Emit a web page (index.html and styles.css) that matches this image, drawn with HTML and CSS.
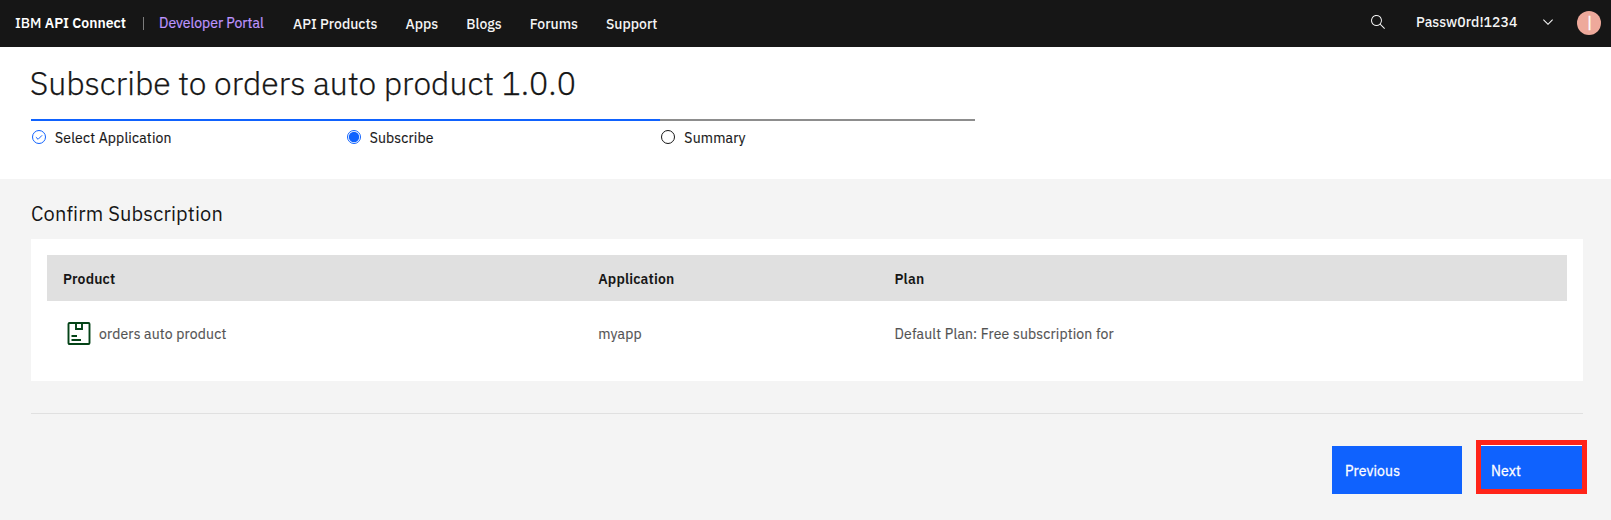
FILE: index.html
```html
<!DOCTYPE html>
<html lang="en">
<head>
<meta charset="utf-8">
<title>Subscribe to orders auto product 1.0.0</title>
<link rel="stylesheet" href="styles.css">
</head>
<body>
<header class="topbar">
  <div class="brand"><span class="brand-ibm">IBM</span> API Connect</div>
  <span class="divider"></span>
  <a class="portal">Developer Portal</a>
  <nav class="nav">
    <a>API Products</a><a>Apps</a><a>Blogs</a><a>Forums</a><a>Support</a>
  </nav>
  <div class="account">
    <svg class="search" viewBox="0 0 16 16"><path d="M15 14.3 10.7 10c1.9-2.3 1.6-5.8-.7-7.7S4.2.7 2.3 3 .7 8.8 3 10.7c2 1.7 5 1.7 7 0l4.3 4.3.7-.7zM2 6.500C2 4 4 2 6.500 2S11 4 11 6.500 9 11 6.500 11 2 9 2 6.500z"/></svg>
    <span class="user">Passw0rd!1234</span>
    <svg class="chevron" viewBox="0 0 16 16"><path d="M8 11 3 6l.7-.7L8 9.600l4.300-4.300.7.7z"/></svg>
    <span class="avatar">|</span>
  </div>
</header>
<section class="intro">
  <h1 class="title">Subscribe to orders auto product 1.0.0</h1>
  <ol class="steps">
    <li class="step step-done"><svg class="step-icon" viewBox="0 0 16 16"><circle cx="8" cy="8" r="6.500"/><path d="m4.900 8.200 2.200 2.100 4-4"/></svg><span>Select Application</span></li>
    <li class="step step-current"><svg class="step-icon" viewBox="0 0 16 16"><circle cx="8" cy="8" r="6.500"/><circle class="dot" cx="8" cy="8" r="5.200"/></svg><span>Subscribe</span></li>
    <li class="step"><svg class="step-icon" viewBox="0 0 16 16"><circle cx="8" cy="8" r="6.500"/></svg><span>Summary</span></li>
  </ol>
</section>
<main class="content">
  <h2 class="subtitle">Confirm Subscription</h2>
  <div class="card">
    <div class="row row-head"><span>Product</span><span>Application</span><span>Plan</span></div>
    <div class="row row-body">
      <span class="product"><svg class="box" viewBox="0 0 24 24"><rect x="1.500" y="1" width="21" height="21" rx="1"/><path d="M9 1v6h6V1M4.500 14H10M4.500 18H14"/></svg>orders auto product</span>
      <span>myapp</span>
      <span>Default Plan: Free subscription for</span>
    </div>
  </div>
  <div class="actions">
    <button class="btn btn-previous">Previous</button>
    <button class="btn btn-next">Next</button>
  </div>
</main>
</body>
</html>
```
FILE: styles.css
```css
* { box-sizing: border-box; }
body { margin: 0; height: 520px; overflow: hidden; background: #f4f4f4; color: #161616; font: 14px/20px "IBM Plex Sans", Roboto, sans-serif; }

.topbar { display: flex; height: 47px; background: #161616; color: #f4f4f4; font-weight: 500; }
.brand { width: 128px; padding: 13px 0 0 15px; font-weight: 600; color: #fff; white-space: nowrap; }
.brand-ibm { font-weight: 500; }
.divider { width: 1px; height: 13px; margin: 17px 0 0 15px; background: #7c7c7c; }
.portal { margin: 13px 0 0 15px; width: 134px; color: #be95ff; font-weight: 400; -webkit-text-stroke: .2px; }
.nav { display: flex; gap: 28px; padding-top: 14px; }
.account { display: flex; margin-left: auto; }
.search { width: 16px; height: 16px; margin: 14px 30px 0 0; fill: #f4f4f4; }
.user { width: 124px; margin-top: 12px; letter-spacing: .04px; }
.chevron { width: 16px; height: 16px; margin-top: 14px; fill: #f4f4f4; }
.avatar { width: 24px; height: 24px; margin: 11px 10px 0 21px; border-radius: 50%; background: #eea99b; color: #fff; font: 14px/22px "Liberation Sans", Arial, sans-serif; text-align: center; text-indent: 1px; -webkit-text-stroke: .4px; }

.intro { height: 132px; padding: 16px 0 0 31px; background: #fff; }
.title { height: 40px; margin: 0 0 16px -1px; font-size: 32px; line-height: 40px; font-weight: 300; -webkit-text-stroke: .25px; }
.steps { display: flex; width: 944px; margin: 0; padding: 0; list-style: none; letter-spacing: .16px; -webkit-text-stroke: .15px; }
.step { display: flex; flex: 1; height: 30px; padding-top: 7px; border-top: 2px solid #8d8d8d; }
.step-done, .step-current { border-color: #0f62fe; }
.step-icon { width: 16px; height: 16px; margin: 1px 8px 0 0; fill: none; stroke: #161616; }
.step-done .step-icon, .step-current .step-icon { stroke: #0f62fe; }
.step-icon .dot { fill: #0f62fe; stroke: none; }

.content { padding: 20px 28px 0 31px; }
.subtitle { height: 40px; margin: 0; font-size: 20px; line-height: 30px; font-weight: 400; letter-spacing: .16px; }
.card { height: 142px; padding: 16px; background: #fff; }
.row { display: grid; grid-template-columns: 535.3px 296.2px 1fr; align-items: center; padding-left: 16px; letter-spacing: .16px; }
.row-head { height: 46px; padding-top: 2px; background: #e0e0e0; font-weight: 600; }
.row-body { height: 66px; color: #525252; -webkit-text-stroke: .15px; }
.product { display: flex; align-items: center; }
.box { width: 24px; height: 24px; margin: 0 8px 0 4px; fill: none; stroke: #044317; stroke-width: 1.900; }

.actions { display: flex; justify-content: flex-end; margin-top: 32px; padding-top: 32px; border-top: 1px solid #e0e0e0; }
.btn { height: 48px; padding: 2px 0 0 13px; border: 0; background: #0f62fe; color: #fff; font: inherit; letter-spacing: .14px; text-align: left; -webkit-text-stroke: .3px; }
.btn-previous { width: 130px; margin-right: 16px; }
.btn-next { position: relative; width: 105px; box-shadow: 0 -2px #fff; }
.btn-next::after { content: ""; position: absolute; inset: -6.500px -3.500px .5px -2.500px; border: 5px solid #ff2419; }
```
